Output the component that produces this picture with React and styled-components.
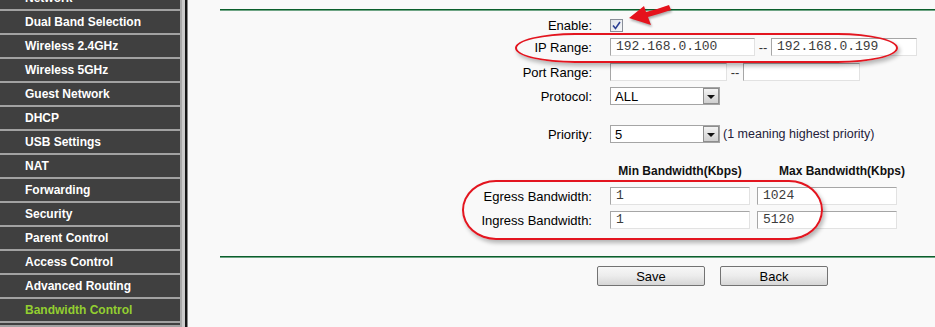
import React from "react";
import styled, { createGlobalStyle } from "styled-components";

const GlobalStyle = createGlobalStyle`
	html, body {
		margin: 0;
		padding: 0;
		height: 100%;
		overflow: hidden;
		background: #f9f9f9;
	}
	#root {
		height: 100%;
	}
`;

const menu = [
	"Network",
	"Dual Band Selection",
	"Wireless 2.4GHz",
	"Wireless 5GHz",
	"Guest Network",
	"DHCP",
	"USB Settings",
	"NAT",
	"Forwarding",
	"Security",
	"Parent Control",
	"Access Control",
	"Advanced Routing",
	"Bandwidth Control",
	"",
];

const Page = styled.div`
	display: flex;
	height: 327px;
	font-family: "Liberation Sans", Arial, sans-serif;
	background: #f9f9f9;
	overflow: hidden;
`;

const Sidebar = styled.div`
	width: 180px;
	flex-shrink: 0;
	background: #404040;
	display: flex;
	flex-direction: column;
	margin-top: -13px;
`;

const MenuItem = styled.div`
	height: 22px;
	line-height: 22px;
	border-bottom: 2px solid #a2a2a2;
	padding-left: 25px;
	font-size: 12px;
	font-weight: bold;
	color: ${(props) => (props.active ? "#93cf30" : "#ffffff")};
	white-space: nowrap;
`;

const Edge = styled.div`
	width: 8px;
	flex-shrink: 0;
	background: linear-gradient(
		to right,
		#a9a9a9 0 2px,
		#cbcbcb 2px 5px,
		#161616 5px 7px,
		#8a8a8a 7px 8px
	);
`;

const Main = styled.div`
	position: relative;
	flex-grow: 1;
	padding-left: 32px;
	display: flex;
	flex-direction: column;
`;

const Rule = styled.div`
	height: 2px;
	margin-top: ${(props) => props.top}px;
	background: linear-gradient(to bottom, #0b5e2c 0 1px, #6fa585 1px 2px);
`;

const Row = styled.div`
	display: grid;
	grid-template-columns: 372px 1fr;
	column-gap: 18px;
	align-items: center;
	height: 18px;
	margin-top: ${(props) => props.top}px;
`;

const Label = styled.div`
	text-align: right;
	font-size: 13px;
	color: #000;
	white-space: nowrap;
`;

const Fields = styled.div`
	display: flex;
	align-items: center;
	height: 18px;
`;

const TextBox = styled.div`
	box-sizing: border-box;
	width: ${(props) => props.w}px;
	height: 18px;
	background: #fff;
	border: 1px solid;
	border-color: #a6a6a6 #e2e2e2 #e2e2e2 #a6a6a6;
	padding-left: 5px;
	font-family: "Liberation Mono", "Courier New", monospace;
	font-size: 13px;
	line-height: 16px;
	color: #3c3c3c;
	white-space: nowrap;
`;

const Dash = styled.span`
	width: ${(props) => props.w}px;
	text-align: center;
	font-size: 13px;
	color: #333;
`;

const Check = styled.div`
	box-sizing: border-box;
	width: 13px;
	height: 13px;
	border: 1px solid #8a8f99;
	background: linear-gradient(135deg, #dfe3ea, #f7f8fa);
	display: flex;
	align-items: center;
	justify-content: center;
`;

const Select = styled.div`
	box-sizing: border-box;
	width: 110px;
	height: 18px;
	background: #fff;
	border: 1px solid #a5a5a5;
	display: flex;
	align-items: center;
	justify-content: space-between;
	padding-left: 4px;
	font-size: 13px;
	color: #000;
`;

const DropButton = styled.div`
	box-sizing: border-box;
	width: 16px;
	height: 16px;
	border: 1px solid #8d8d8d;
	background: linear-gradient(to bottom, #f3f3f3, #cfcfcf);
	display: flex;
	align-items: center;
	justify-content: center;
	&::after {
		content: "";
		border-left: 4px solid transparent;
		border-right: 4px solid transparent;
		border-top: 4px solid #111;
		margin-top: 1px;
	}
`;

const Hint = styled.span`
	margin-left: 3px;
	font-size: 12.5px;
	color: #24213a;
	white-space: nowrap;
`;

const Heading = styled.div`
	width: ${(props) => props.w}px;
	margin-left: ${(props) => props.gap || 0}px;
	text-align: center;
	font-size: 12px;
	font-weight: bold;
	color: #111;
	white-space: nowrap;
`;

const Buttons = styled.div`
	display: flex;
	gap: 15px;
	margin-top: 8px;
	padding-left: 377px;
`;

const Button = styled.button`
	box-sizing: border-box;
	width: 108px;
	height: 20px;
	padding: 0;
	border: 1px solid #737373;
	border-radius: 2px;
	background: linear-gradient(to bottom, #f7f7f7 0%, #ececec 50%, #d6d6d6 100%);
	font-family: "Liberation Sans", Arial, sans-serif;
	font-size: 13px;
	color: #000;
`;

const Circle = styled.div`
	position: absolute;
	left: ${(props) => props.x}px;
	top: ${(props) => props.y}px;
	width: ${(props) => props.w}px;
	height: ${(props) => props.h}px;
	box-sizing: border-box;
	border: 2px solid #e3151f;
	border-radius: ${(props) => props.r};
	box-shadow: 2px 3px 4px rgba(0, 0, 0, 0.28);
	pointer-events: none;
`;

const Arrow = styled.svg`
	position: absolute;
	left: 436px;
	top: 1px;
	filter: drop-shadow(1px 2px 1px rgba(0, 0, 0, 0.3));
`;

function Input({ w, value }) {
	return <TextBox w={w}>{value}</TextBox>;
}

function Dropdown({ value }) {
	return (
		<Select>
			<span>{value}</span>
			<DropButton />
		</Select>
	);
}

export default function App() {
	return (
		<Page>
			<GlobalStyle />
			<Sidebar>
				{menu.map((item, i) => (
					<MenuItem key={i} active={item === "Bandwidth Control"}>
						{item}
					</MenuItem>
				))}
			</Sidebar>
			<Edge />
			<Main>
				<Rule top={9} />

				<Row top={5}>
					<Label>Enable:</Label>
					<Fields>
						<Check>
							<svg width='9' height='9' viewBox='0 0 9 9'>
								<path
									d='M1 4.5 L3.5 7.5 L8 1'
									fill='none'
									stroke='#2c3f94'
									strokeWidth='1.6'
								/>
							</svg>
						</Check>
					</Fields>
				</Row>
				<Row top={4}>
					<Label>IP Range:</Label>
					<Fields>
						<Input w={145} value='192.168.0.100' />
						<Dash w={16}>--</Dash>
						<Input w={146} value='192.168.0.199' />
					</Fields>
				</Row>
				<Row top={7}>
					<Label>Port Range:</Label>
					<Fields>
						<Input w={117} value='' />
						<Dash w={16}>--</Dash>
						<Input w={117} value='' />
					</Fields>
				</Row>
				<Row top={6}>
					<Label>Protocol:</Label>
					<Fields>
						<Dropdown value='ALL' />
					</Fields>
				</Row>
				<Row top={20}>
					<Label>Priority:</Label>
					<Fields>
						<Dropdown value='5' />
						<Hint>(1 meaning highest priority)</Hint>
					</Fields>
				</Row>
				<Row top={19}>
					<Label />
					<Fields>
						<Heading w={140}>Min Bandwidth(Kbps)</Heading>
						<Heading w={170} gap={7}>
							Max Bandwidth(Kbps)
						</Heading>
					</Fields>
				</Row>
				<Row top={7}>
					<Label>Egress Bandwidth:</Label>
					<Fields>
						<Input w={140} value='1' />
						<Dash w={7} />
						<Input w={140} value='1024' />
					</Fields>
				</Row>
				<Row top={6}>
					<Label>Ingress Bandwidth:</Label>
					<Fields>
						<Input w={140} value='1' />
						<Dash w={7} />
						<Input w={140} value='5120' />
					</Fields>
				</Row>

				<Rule top={27} />

				<Buttons>
					<Button>Save</Button>
					<Button>Back</Button>
				</Buttons>

				<Circle x={327} y={33} w={383} h={30} r='60px / 15px' />
				<Circle x={274} y={180} w={361} h={60} r='34px / 30px' />
				<Arrow width='50' height='28' viewBox='0 0 50 28'>
					<path
						d='M5 17 L20 5 L22 11 Q34 8 45 4 L47 9 Q35 13 24 16 L27 24 Z'
						fill='#e5121c'
					/>
				</Arrow>
			</Main>
		</Page>
	);
}
